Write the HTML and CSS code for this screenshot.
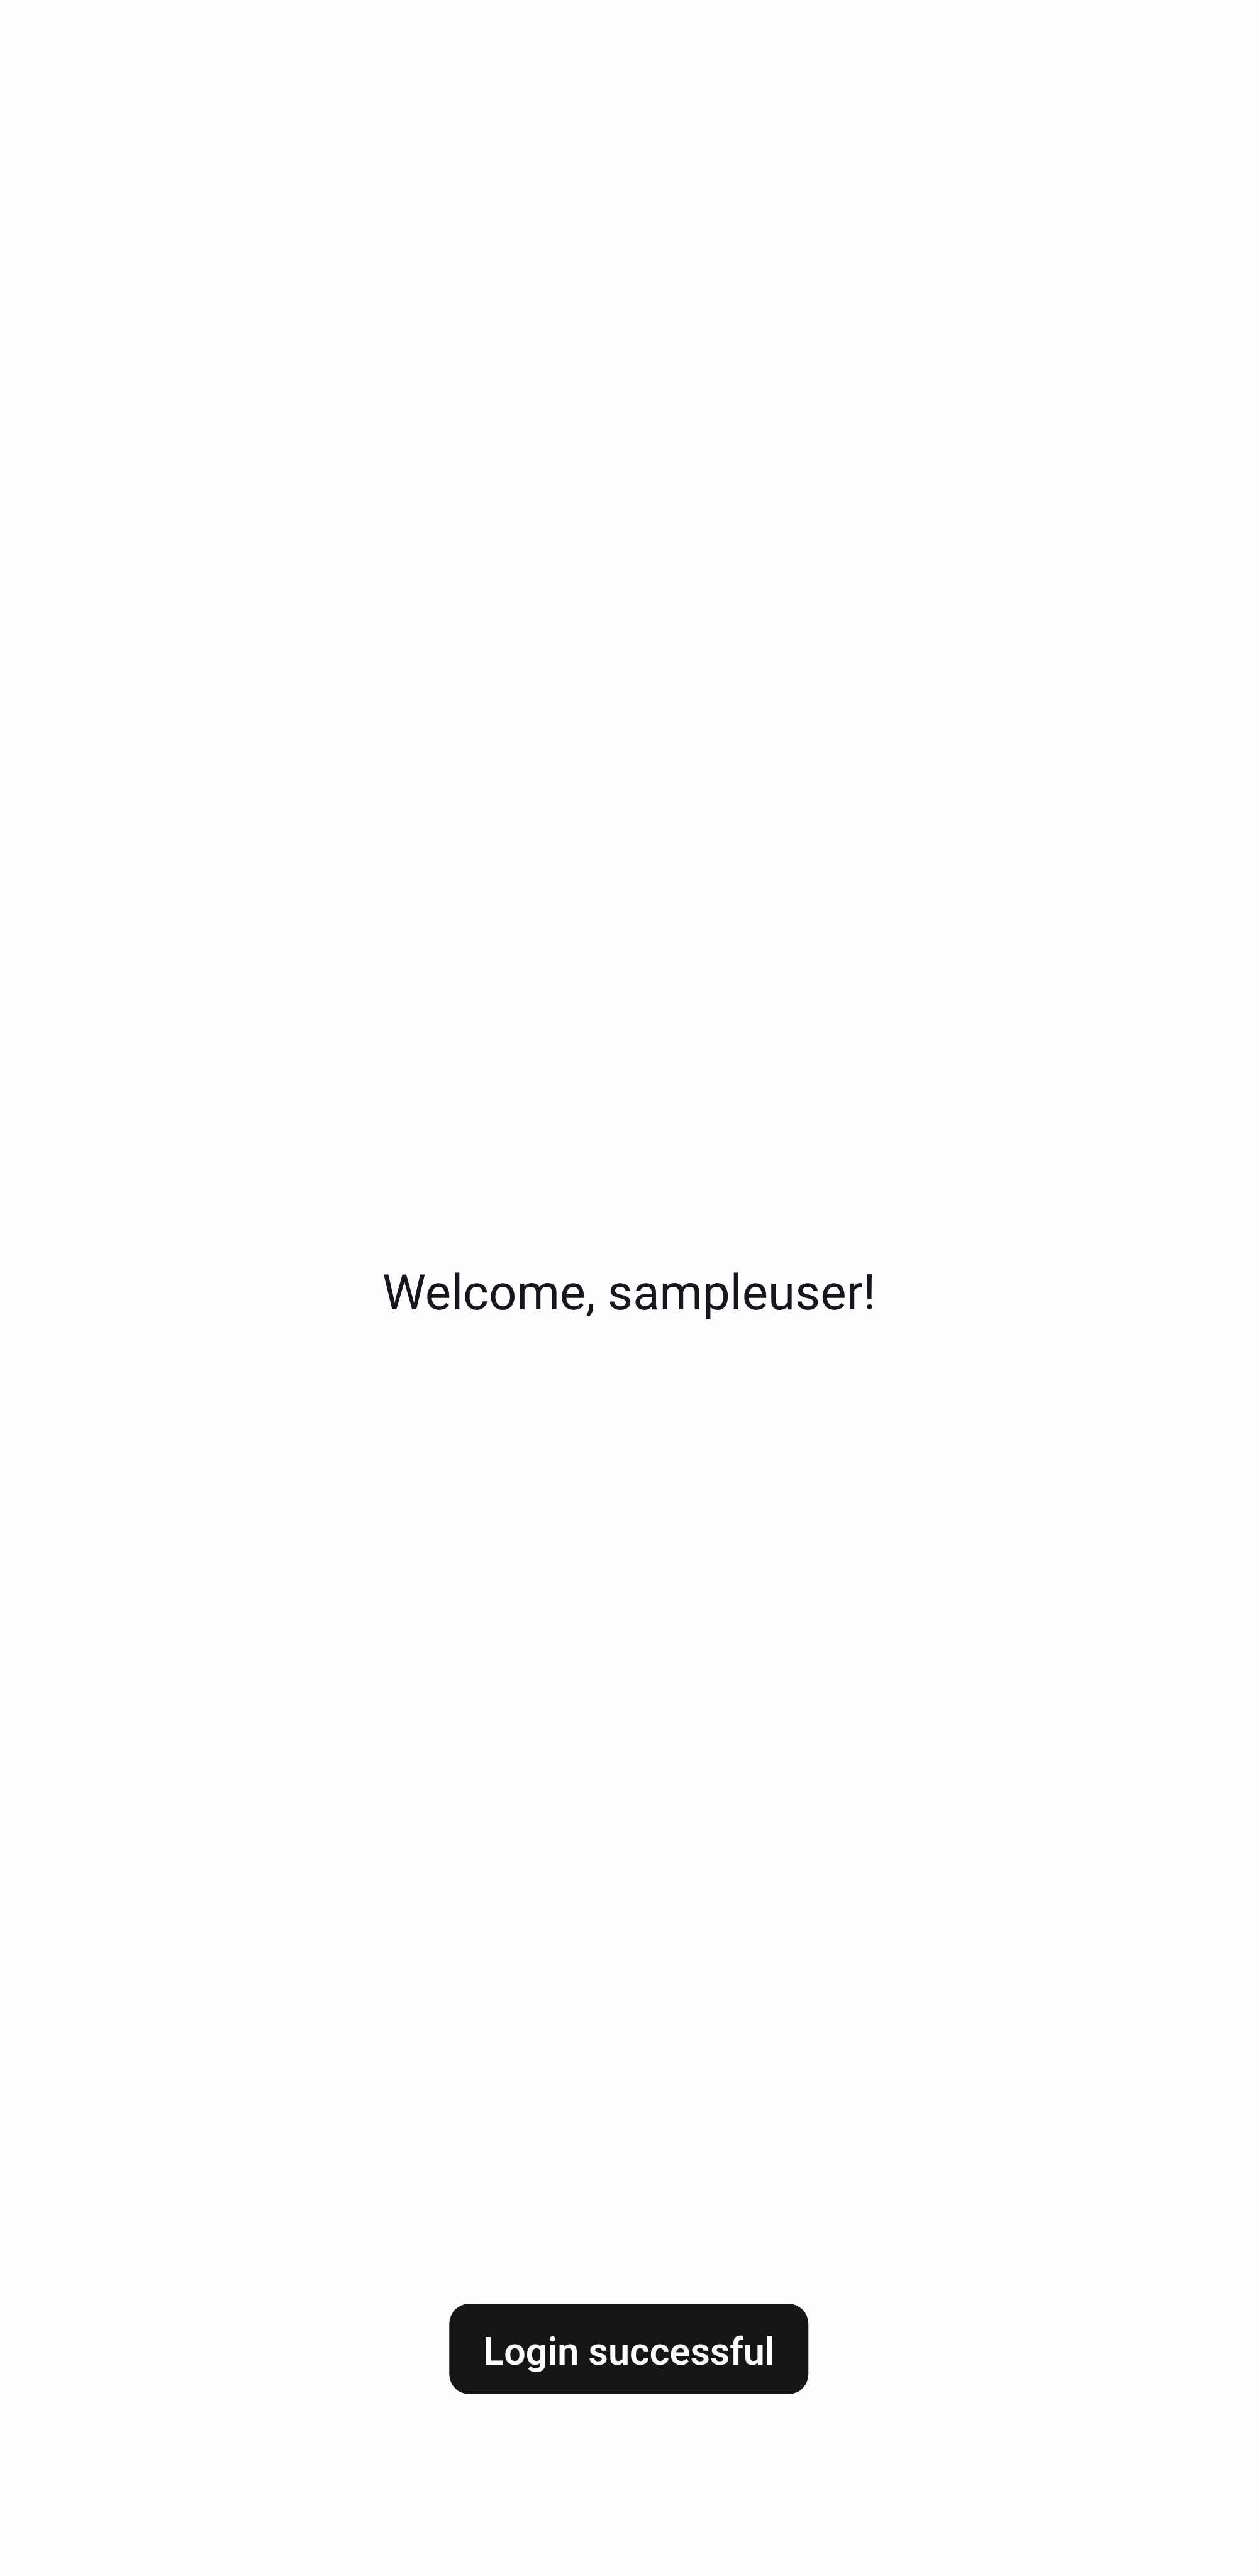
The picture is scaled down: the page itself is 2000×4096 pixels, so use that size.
FILE: index.html
```html
<!DOCTYPE html>
<html lang="en">
<head>
<meta charset="utf-8">
<meta name="viewport" content="width=device-width, initial-scale=1">
<title>Welcome</title>
<link rel="stylesheet" href="styles.css">
</head>
<body>
<main class="screen">
<h1 class="greeting">Welcome, sampleuser!</h1>
</main>
<div class="toast" role="status">Login successful</div>
</body>
</html>
```
FILE: styles.css
```css
* {
  box-sizing: border-box;
}

body {
  margin: 0;
  background: #fffdff;
  color: #17161a;
  font-family: Roboto, "Liberation Sans", sans-serif;
}

.screen {
  display: flex;
  align-items: center;
  justify-content: center;
  min-height: 100vh;
  padding-top: 16px;
}

.greeting {
  margin: 0;
  font-size: 78px;
  font-weight: 400;
  line-height: 104px;
}

.toast {
  position: fixed;
  bottom: 289px;
  left: 50%;
  transform: translateX(-50%);
  padding: 40px 54px 32px;
  border-radius: 32px;
  background: #161518;
  color: #fff;
  font-size: 61px;
  font-weight: 600;
  line-height: 72px;
  white-space: nowrap;
}
```
